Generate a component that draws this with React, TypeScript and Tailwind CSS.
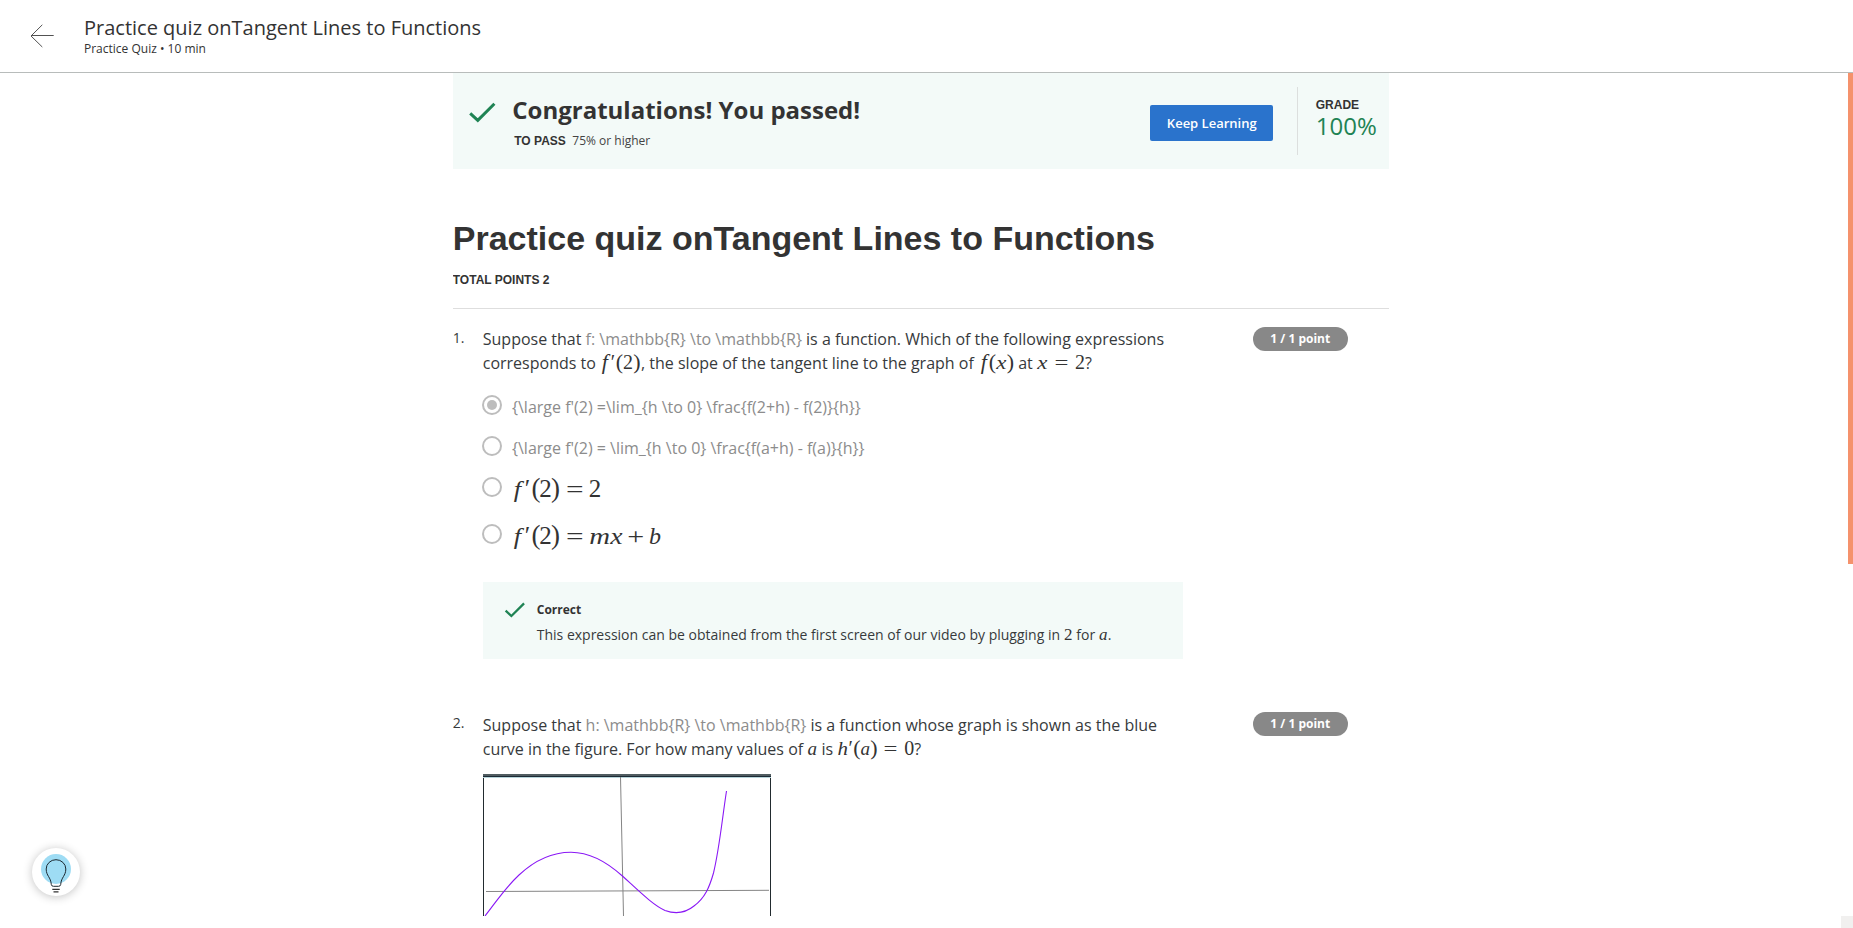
import React from "react";

type MathGlyph = { text: string; width: number; roman?: boolean; size?: number; stretch?: number };

const mathSerif = "font-['Liberation_Serif']";

function MathRun({ glyphs, large = false }: { glyphs: MathGlyph[]; large?: boolean }) {
  return (
    <span className={`inline-flex items-baseline leading-[0] whitespace-pre text-[#333] ${mathSerif} ${large ? "-ml-px text-[24px]" : "text-[19px]"}`}>
      {glyphs.map((g, i) => (
        <span
          key={i}
          className={`flex justify-center ${g.roman ? "" : "italic"}`}
          style={{ width: g.width, fontSize: g.size }}
        >
          <span className="block" style={g.stretch ? { transform: `scaleX(${g.stretch})` } : undefined}>{g.text}</span>
        </span>
      ))}
    </span>
  );
}

const largePrefix: MathGlyph[] = [
  { text: "f", width: 12, size: 24, stretch: 1.1 },
  { text: "′", width: 9, roman: true, size: 25 },
  { text: "(", width: 8, roman: true, size: 27 },
  { text: "2", width: 11, roman: true, size: 25 },
  { text: ")", width: 9, roman: true, size: 27 },
  { text: "=", width: 29, roman: true, stretch: 1.3 },
];

function Tex({ children }: { children: React.ReactNode }) {
  return <span className="text-[#8c8c8c]">{children}</span>;
}

function Check({ className }: { className: string }) {
  return (
    <svg viewBox="0 0 27 21" fill="none" stroke="#1f8354" strokeWidth="3" className={className}>
      <path d="M1.2 11.3 8.8 18.4 25.4 1.8" />
    </svg>
  );
}

function Radio({ selected = false }: { selected?: boolean }) {
  return (
    <span className="mr-[10px] -ml-[0.75px] flex size-5 shrink-0 items-center justify-center rounded-full border-2 border-[#bdbdbd]">
      {selected && <span className="size-[10px] rounded-full bg-[#bdbdbd]" />}
    </span>
  );
}

function Points() {
  return (
    <div className="ml-auto mr-[41px] h-6 w-[95px] rounded-full bg-[#888] text-center text-[12px] leading-[23px] font-bold text-white">
      1 / 1 point
    </div>
  );
}

export default function App() {
  return (
    <div className="relative flex h-[928px] w-[1853px] flex-col overflow-hidden bg-white font-['Open_Sans',sans-serif] text-[#373a3c]">
      <header className="flex h-[73px] shrink-0 border-b border-[#b8bcbb]">
        <svg viewBox="0 0 24 24" fill="none" stroke="#525252" className="mt-6 ml-[30px] size-6">
          <path d="M1 11.5H23.7M12.3.8 1 12 12.3 23" />
        </svg>
        <div className="mt-[15px] ml-[30px]">
          <div className="h-[26px] text-[20px] leading-[26px] text-[#333]">Practice quiz onTangent Lines to Functions</div>
          <div className="text-[12px] leading-[15px] text-[#333]">Practice Quiz • 10 min</div>
        </div>
      </header>

      <main className="ml-[452.75px] h-[843px] w-[936px] shrink-0 overflow-hidden">
        <section className="flex h-24 bg-[#f3faf8]">
          <Check className="mt-[29px] ml-[16.5px] h-[21px] w-[27px] shrink-0" />
          <div className="ml-4 pt-[19px]">
            <div className="h-[37px] text-[24px] leading-[36px] font-bold whitespace-nowrap text-[#333]">Congratulations! You passed!</div>
            <div className="ml-[2px] flex items-baseline text-[12px] leading-[24px]">
              <span className="mr-[6.5px] font-['Liberation_Sans'] font-bold text-[#333]">TO PASS</span>
              <span className="text-[#444]">75% or higher</span>
            </div>
          </div>
          <button className="mt-8 ml-auto h-9 w-[123px] rounded-[2px] bg-[#2a73cc] text-[13px] leading-9 font-semibold text-white">Keep Learning</button>
          <div className="mt-[14px] ml-6 h-[68px] border-l border-[#dcdfde]" />
          <div className="ml-[17.5px] w-[73px] pt-[25px]">
            <div className="font-['Liberation_Sans'] text-[12px] leading-[14px] font-bold text-[#333]">GRADE</div>
            <div className="text-[24px] leading-[28px] text-[#1f8354]">100%</div>
          </div>
        </section>

        <h1 className="mt-[49px] h-[40px] font-['Liberation_Sans'] text-[34px] leading-[40px] font-bold whitespace-nowrap text-[#333]">
          Practice quiz onTangent Lines to Functions
        </h1>
        <div className="mt-[14px] h-[16px] font-['Liberation_Sans'] text-[12px] leading-[16px] font-bold text-[#333]">TOTAL POINTS 2</div>
        <div className="mt-[20px] border-b border-[#dedede]" />

        <section className="mt-[18px] flex h-[385px]">
          <div className="w-[30px] text-[14px] leading-[22px]">1.</div>
          <div className="w-[700px]">
            <div className="text-[16px] leading-6 whitespace-nowrap">
              <div className="h-6">
                Suppose that <Tex>f: \mathbb{"{R}"} \to \mathbb{"{R}"}</Tex> is a function. Which of the following expressions
              </div>
              <div className="h-6">
                corresponds to{" "}
                <MathRun glyphs={[{ text: "f", width: 10, size: 20, stretch: 1.1 }, { text: "′", width: 6, roman: true, size: 20 }, { text: "(", width: 7, roman: true, size: 22 }, { text: "2", width: 10, roman: true, size: 20 }, { text: ")", width: 8, roman: true, size: 22 }]} />
                , the slope of the tangent line to the graph of{" "}
                <MathRun glyphs={[{ text: "f", width: 11, size: 20, stretch: 1.1 }, { text: "(", width: 7, roman: true, size: 22 }, { text: "x", width: 11, stretch: 1.2 }, { text: ")", width: 7, roman: true, size: 22 }]} />{" "}
                at{" "}
                <MathRun glyphs={[{ text: "x", width: 11, stretch: 1.2 }, { text: "=", width: 27, roman: true, stretch: 1.3 }, { text: "2", width: 10, roman: true, size: 20 }]} />?
              </div>
            </div>
            <div className="mt-[20px] text-[16px] whitespace-nowrap">
              <div className="flex h-[41px] items-start">
                <Radio selected />
                <span className="leading-6"><Tex>{"{\\large f'(2) =\\lim_{h \\to 0} \\frac{f(2+h) - f(2)}{h}}"}</Tex></span>
              </div>
              <div className="flex h-[41px] items-start">
                <Radio />
                <span className="leading-6"><Tex>{"{\\large f'(2) = \\lim_{h \\to 0} \\frac{f(a+h) - f(a)}{h}}"}</Tex></span>
              </div>
              <div className="flex h-[47px] items-start">
                <Radio />
                <span className="h-[26px] leading-[28px]">
                  <MathRun large glyphs={[...largePrefix, { text: "2", width: 12, roman: true, size: 25 }]} />
                </span>
              </div>
              <div className="flex h-[26px] items-start">
                <Radio />
                <span className="h-[26px] leading-[28px]">
                  <MathRun large glyphs={[...largePrefix, { text: "m", width: 21, stretch: 1.2 }, { text: "x", width: 13, stretch: 1.15 }, { text: "+", width: 26, roman: true, stretch: 1.25 }, { text: "b", width: 12 }]} />
                </span>
              </div>
            </div>
            <div className="mt-[32px] flex h-[77px] bg-[#f3faf8]">
              <Check className="mt-[20px] ml-[21px] h-[16px] w-[22px] shrink-0" />
              <div className="ml-[11px] pt-[18px]">
                <div className="h-[20px] text-[12px] leading-[20px] font-bold text-[#333]">Correct</div>
                <div className="mt-[3px] text-[14px] leading-[24px] whitespace-nowrap">
                  This expression can be obtained from the first screen of our video by plugging in{" "}
                  <MathRun glyphs={[{ text: "2", width: 9, roman: true, size: 17 }]} /> for{" "}
                  <MathRun glyphs={[{ text: "a", width: 9, size: 17 }]} />.
                </div>
              </div>
            </div>
          </div>
          <Points />
        </section>

        <section className="flex">
          <div className="w-[30px] text-[14px] leading-[22px]">2.</div>
          <div className="w-[700px] pt-px">
            <div className="text-[16px] leading-6 whitespace-nowrap">
              <div className="h-6">
                Suppose that <Tex>h: \mathbb{"{R}"} \to \mathbb{"{R}"}</Tex> is a function whose graph is shown as the blue
              </div>
              <div className="h-6">
                curve in the figure. For how many values of{" "}
                <MathRun glyphs={[{ text: "a", width: 10 }]} /> is{" "}
                <MathRun glyphs={[{ text: "h", width: 11, stretch: 1.1 }, { text: "′", width: 5, roman: true, size: 20 }, { text: "(", width: 7, roman: true, size: 22 }, { text: "a", width: 10 }, { text: ")", width: 7, roman: true, size: 22 }, { text: "=", width: 27, roman: true, stretch: 1.3 }, { text: "0", width: 10, roman: true, size: 20 }]} />?
              </div>
            </div>
            <svg viewBox="0 0 288 142" fill="none" className="mt-[13px] h-[142px] w-[288px]">
              <path d="M.5 0V142M287.5 0V142" stroke="#222b2f" />
              <path d="M0 1H288" stroke="#505c60" strokeWidth="2" />
              <path d="M0 2.5H288" stroke="#1c2b36" />
              <path d="M0 3.5H288" stroke="#b8d5da" />
              <path d="M137.5 3 140.5 142M3 117.5 286 116.3" stroke="#858585" />
              <path d="M2 142C13 128 22 114 36 101C53 85 70 78.200 88 78.200C106 78.200 123 87 140 102.500C157 118 170 131 182 136.5C193 140.5 203 138.5 211 132C222 124 226.500 113 230.500 99C236.500 74 239 46 243.500 17" stroke="#8a18f5" strokeWidth="1.1" />
            </svg>
          </div>
          <Points />
        </section>
      </main>

      <button className="absolute top-[848px] left-8 flex size-12 items-center justify-center rounded-full bg-white shadow-[0_1px_10px_rgba(0,0,0,0.24)]">
        <svg viewBox="0 0 48 48" fill="none" className="size-12">
          <circle cx="24" cy="21" r="15" fill="#9edcf4" />
          <path d="M19.300 36.500C18.800 29 14.200 28 14.200 21A9.800 9.300 0 0 1 33.800 21C33.800 28 29.200 29 28.700 36.500Q28.500 38.300 26.500 38.300H21.500Q19.500 38.300 19.300 36.500Z" stroke="#1c2830" />
          <path d="M20.300 41.300H27.700M21.500 43.900H26.500" stroke="#333" strokeWidth="1.200" />
        </svg>
      </button>
      <div className="absolute top-[73px] right-0 h-[491px] w-[5px] bg-[#f5926c]" />
      <div className="absolute right-0 bottom-0 size-3 bg-[#f1f0ef]" />
    </div>
  );
}
